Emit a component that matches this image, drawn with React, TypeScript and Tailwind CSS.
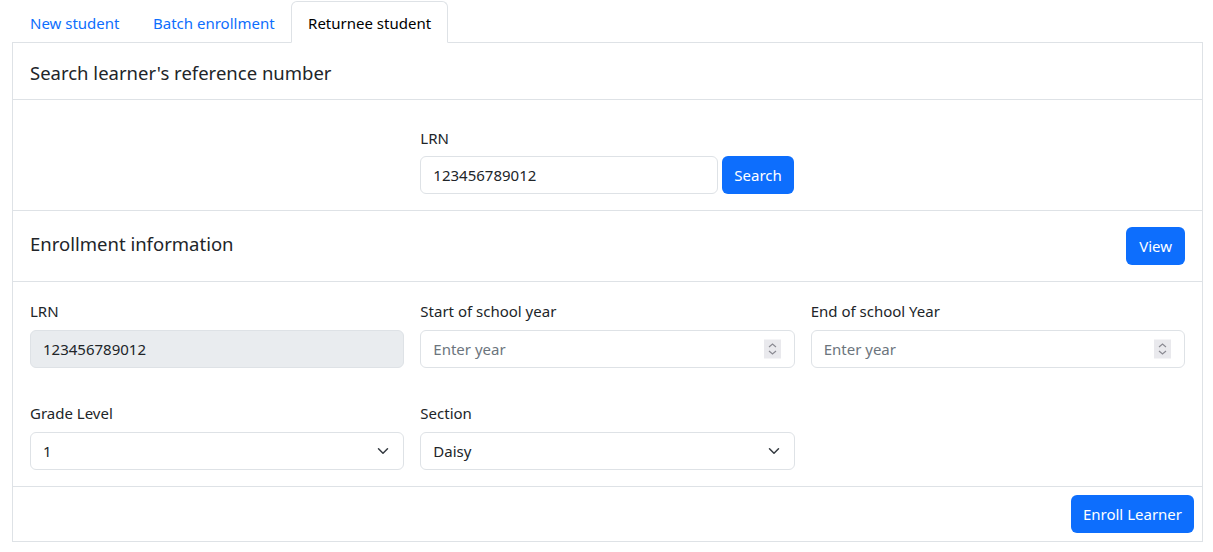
import React from 'react';

const FONT = "font-['Noto_Sans','Open_Sans',sans-serif]";

function Spinner() {
  return (
    <span className="absolute right-[13px] top-1/2 -translate-y-1/2 w-[17px] h-[19px] bg-[#e9e9ed] flex items-center justify-center">
      <svg width="9" height="13" viewBox="0 0 9 13" fill="none" stroke="#8b8b93" strokeWidth="1.2">
        <path d="M1 4.5 L4.5 1.5 L8 4.5" />
        <path d="M1 8.5 L4.5 11.5 L8 8.5" />
      </svg>
    </span>
  );
}

function Chevron() {
  return (
    <svg className="absolute right-3 top-1/2 -translate-y-1/2" width="16" height="12" viewBox="0 0 16 16" fill="none" stroke="#343a40" strokeWidth="2" strokeLinecap="round" strokeLinejoin="round">
      <path d="m2 5 6 6 6-6" />
    </svg>
  );
}

const inputCls = "w-full h-[38px] px-3 rounded-[6px] border border-[#dee2e6] text-[15px] text-[#212529] bg-white flex items-center";
const btnCls = "h-[38px] px-3 rounded-[6px] bg-[#0d6efd] text-white text-[15px]";

function Field({ label, children }: { label: string; children: React.ReactNode }) {
  return (
    <div>
      <div className="text-[15px] leading-6 mb-[7px] text-[#212529]">{label}</div>
      {children}
    </div>
  );
}

export default function App() {
  const tabs = ["New student", "Batch enrollment", "Returnee student"];
  return (
    <div className={`${FONT} bg-white min-h-screen pl-3 pr-[10px] text-[#212529]`}>
      {/* Tabs */}
      <ul className="flex pl-[1px] pt-[1px] border-b border-[#dee2e6]">
        {tabs.map((t, i) => (
          <li key={t} className="-mb-px">
            <div
              className={
                i === 2
                  ? "pl-4 pr-[15.5px] pt-[9px] pb-[7px] leading-6 text-[15px] text-[#000] bg-white border border-[#dee2e6] border-b-white rounded-t-[6px]"
                  : "pl-4 pr-[15.5px] pt-[9px] pb-[7px] leading-6 text-[15px] text-[#0d6efd] border border-transparent"
              }
            >
              {t}
            </div>
          </li>
        ))}
      </ul>

      {/* Card */}
      <div className="border border-t-0 border-[#dee2e6]">
        <div className="px-[17px] pt-[18px] pb-[14px] border-b border-[#dee2e6]">
          <h5 className="text-[18.5px] leading-6">Search learner's reference number</h5>
        </div>
        <div className="px-[17px] pt-[26px] pb-4 border-b border-[#dee2e6] grid grid-cols-3 gap-4">
          <div className="col-start-2 col-span-2">
            <div className="text-[15px] leading-6 mb-[6px]">LRN</div>
            <div className="flex gap-[4px]">
              <div className={`${inputCls} !w-[298px]`}>123456789012</div>
              <button className={btnCls}>Search</button>
            </div>
          </div>
        </div>

        <div className="px-[17px] py-4 border-b border-[#dee2e6] flex items-center justify-between">
          <h5 className="text-[18.5px] leading-6 mb-[4px]">Enrollment information</h5>
          <button className="h-[38px] px-[13px] rounded-[6px] bg-[#0d6efd] text-white text-[15px]">View</button>
        </div>

        <div className="px-[17px] pt-[17px] pb-4 grid grid-cols-3 gap-x-4 gap-y-[33px]">
          <Field label="LRN">
            <div className={`${inputCls} !bg-[#e9ecef]`}>123456789012</div>
          </Field>
          <Field label="Start of school year">
            <div className={`${inputCls} relative !text-[#6c757d]`}>
              Enter year
              <Spinner />
            </div>
          </Field>
          <Field label="End of school Year">
            <div className={`${inputCls} relative !text-[#6c757d]`}>
              Enter year
              <Spinner />
            </div>
          </Field>
          <Field label="Grade Level">
            <div className={`${inputCls} relative`}>
              1
              <Chevron />
            </div>
          </Field>
          <Field label="Section">
            <div className={`${inputCls} relative`}>
              Daisy
              <Chevron />
            </div>
          </Field>
        </div>

        <div className="p-2 border-t border-[#dee2e6] flex justify-end">
          <button className={btnCls}>Enroll Learner</button>
        </div>
      </div>
    </div>
  );
}
